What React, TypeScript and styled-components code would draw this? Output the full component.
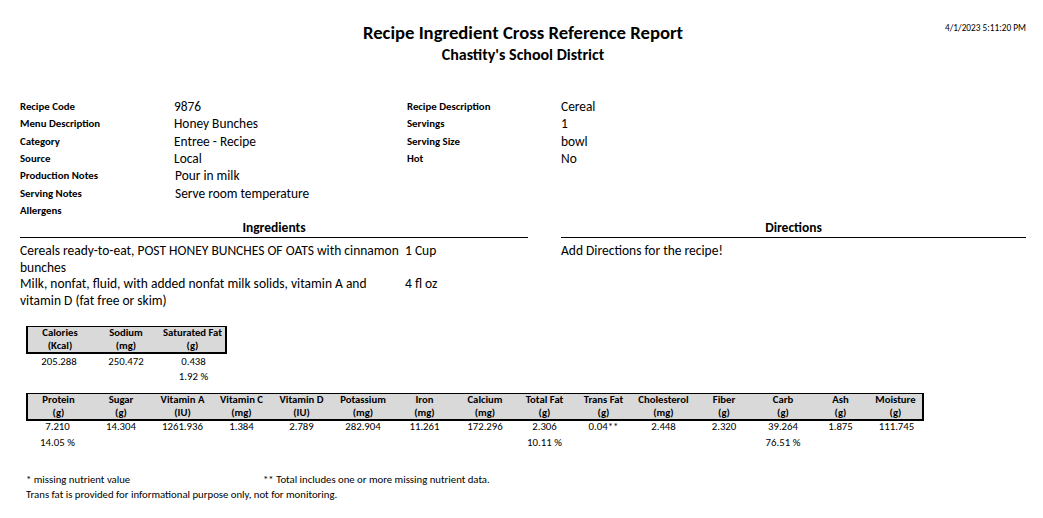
import React from "react";
import styled, { createGlobalStyle } from "styled-components";

const Global = createGlobalStyle`
  html, body { margin: 0; padding: 0; background: #fff; }
  body { font-family: Carlito, Lato, "Liberation Sans", sans-serif; color: #000; }
`;

const Page = styled.div`
  width: 1043px;
  height: 518px;
  box-sizing: border-box;
  padding: 0 17px 0 20px;
  overflow: hidden;
`;

const Header = styled.header`
  display: grid;
  grid-template-columns: 1fr auto 1fr;
  align-items: start;
  padding-top: 22px;
`;

const TitleBlock = styled.div`
  text-align: center;
`;

const Title = styled.h1`
  margin: 0;
  font-size: 18.7px;
  font-weight: 700;
  line-height: 22px;
`;

const Subtitle = styled.h2`
  margin: 0;
  font-size: 16px;
  font-weight: 700;
  line-height: 22px;
`;

const DateStamp = styled.div`
  justify-self: end;
  font-size: 9.3px;
  line-height: 12px;
  margin-top: 0;
`;

const InfoGrid = styled.div`
  display: grid;
  grid-template-columns: 154px 233px 154px auto;
  grid-auto-rows: 17.3px;
  align-items: center;
  margin-top: 32px;
`;

const Label = styled.div`
  font-size: 10.8px;
  font-weight: 700;
`;

const Value = styled.div<{ $shift?: number }>`
  font-size: 13.4px;
  padding-left: ${(p) => p.$shift ?? 0}px;
`;

const Sections = styled.div`
  display: grid;
  grid-template-columns: 508px 465px;
  column-gap: 33px;
  margin-top: 1px;
`;

const SectionHead = styled.div`
  text-align: center;
  font-size: 13.5px;
  font-weight: 700;
  line-height: 16px;
  border-bottom: 1px solid #000;
  padding-bottom: 1px;
`;

const IngredientList = styled.div`
  display: grid;
  grid-template-columns: 385px auto;
  margin-top: 5px;
  font-size: 13.5px;
  line-height: 16.5px;
`;

const Directions = styled.div`
  margin-top: 5px;
  font-size: 13.5px;
  line-height: 16.5px;
`;

const NutTable = styled.div<{ $cols: string; $mt: number }>`
  display: grid;
  grid-template-columns: ${(p) => p.$cols};
  margin-top: ${(p) => p.$mt}px;
  margin-left: 6px;
  width: max-content;
`;

const HeadCell = styled.div<{ $first?: boolean; $last?: boolean }>`
  background: #d9d9d9;
  border-top: 1.5px solid #000;
  border-bottom: 2.5px solid #000;
  border-left: ${(p) => (p.$first ? "2.5px solid #000" : "none")};
  border-right: ${(p) => (p.$last ? "2.5px solid #000" : "none")};
  text-align: center;
  font-size: 10.7px;
  font-weight: 700;
  line-height: 12.5px;
`;

const Cell = styled.div<{ $h: number }>`
  text-align: center;
  font-size: 10.8px;
  line-height: ${(p) => p.$h}px;
`;

const Footnotes = styled.div`
  margin-top: 20px;
  margin-left: 6px;
  font-size: 10.75px;
  line-height: 15px;
`;

const FootRow = styled.div`
  display: grid;
  grid-template-columns: 237px auto;
`;

type Nut = { name: string; unit: string; value: string; pct?: string };

const small: Nut[] = [
  { name: "Calories", unit: "(Kcal)", value: "205.288" },
  { name: "Sodium", unit: "(mg)", value: "250.472" },
  { name: "Saturated Fat", unit: "(g)", value: "0.438", pct: "1.92 %" },
];

const big: Nut[] = [
  { name: "Protein", unit: "(g)", value: "7.210", pct: "14.05 %" },
  { name: "Sugar", unit: "(g)", value: "14.304" },
  { name: "Vitamin A", unit: "(IU)", value: "1261.936" },
  { name: "Vitamin C", unit: "(mg)", value: "1.384" },
  { name: "Vitamin D", unit: "(IU)", value: "2.789" },
  { name: "Potassium", unit: "(mg)", value: "282.904" },
  { name: "Iron", unit: "(mg)", value: "11.261" },
  { name: "Calcium", unit: "(mg)", value: "172.296" },
  { name: "Total Fat", unit: "(g)", value: "2.306", pct: "10.11 %" },
  { name: "Trans Fat", unit: "(g)", value: "0.04**" },
  { name: "Cholesterol", unit: "(mg)", value: "2.448" },
  { name: "Fiber", unit: "(g)", value: "2.320" },
  { name: "Carb", unit: "(g)", value: "39.264", pct: "76.51 %" },
  { name: "Ash", unit: "(g)", value: "1.875" },
  { name: "Moisture", unit: "(g)", value: "111.745" },
];

function NutrientTable({
  items,
  cols,
  mt,
  valueH,
  pctH,
}: {
  items: Nut[];
  cols: string;
  mt: number;
  valueH: number;
  pctH: number;
}) {
  return (
    <NutTable $cols={cols} $mt={mt}>
      {items.map((it, i) => (
        <HeadCell key={it.name} $first={i === 0} $last={i === items.length - 1}>
          {it.name}
          <br />
          {it.unit}
        </HeadCell>
      ))}
      {items.map((it) => (
        <Cell key={it.name + "v"} $h={valueH}>
          {it.value}
        </Cell>
      ))}
      {items.map((it) => (
        <Cell key={it.name + "p"} $h={pctH}>
          {it.pct ?? ""}
        </Cell>
      ))}
    </NutTable>
  );
}

export default function App() {
  return (
    <>
      <Global />
      <Page>
        <Header>
          <div />
          <TitleBlock>
            <Title>Recipe Ingredient Cross Reference Report</Title>
            <Subtitle>Chastity's School District</Subtitle>
          </TitleBlock>
          <DateStamp>4/1/2023 5:11:20 PM</DateStamp>
        </Header>

        <InfoGrid>
          <Label>Recipe Code</Label>
          <Value>9876</Value>
          <Label>Recipe Description</Label>
          <Value>Cereal</Value>
          <Label>Menu Description</Label>
          <Value>Honey Bunches</Value>
          <Label>Servings</Label>
          <Value>1</Value>
          <Label>Category</Label>
          <Value>Entree - Recipe</Value>
          <Label>Serving Size</Label>
          <Value>bowl</Value>
          <Label>Source</Label>
          <Value>Local</Value>
          <Label>Hot</Label>
          <Value>No</Value>
          <Label>Production Notes</Label>
          <Value $shift={1}>Pour in milk</Value>
          <div />
          <div />
          <Label>Serving Notes</Label>
          <Value $shift={1}>Serve room temperature</Value>
          <div />
          <div />
          <Label>Allergens</Label>
          <Value />
          <div />
          <div />
        </InfoGrid>

        <Sections>
          <div>
            <SectionHead>Ingredients</SectionHead>
            <IngredientList>
              <div>Cereals ready-to-eat, POST HONEY BUNCHES OF OATS with cinnamon bunches</div>
              <div>1 Cup</div>
              <div>Milk, nonfat, fluid, with added nonfat milk solids, vitamin A and vitamin D (fat free or skim)</div>
              <div>4 fl oz</div>
            </IngredientList>
          </div>
          <div>
            <SectionHead>Directions</SectionHead>
            <Directions>Add Directions for the recipe!</Directions>
          </div>
        </Sections>

        <NutrientTable items={small} cols="66px 68px 67px" mt={17} valueH={16} pctH={14} />
        <NutrientTable
          items={big}
          cols="63px 64px 59px 59px 61px 62px 61px 60px 59px 59px 61px 60px 58px 57px 55px"
          mt={9}
          valueH={12}
          pctH={19}
        />

        <Footnotes>
          <FootRow>
            <div>* missing nutrient value</div>
            <div>** Total includes one or more missing nutrient data.</div>
          </FootRow>
          <div>Trans fat is provided for informational purpose only, not for monitoring.</div>
        </Footnotes>
      </Page>
    </>
  );
}
